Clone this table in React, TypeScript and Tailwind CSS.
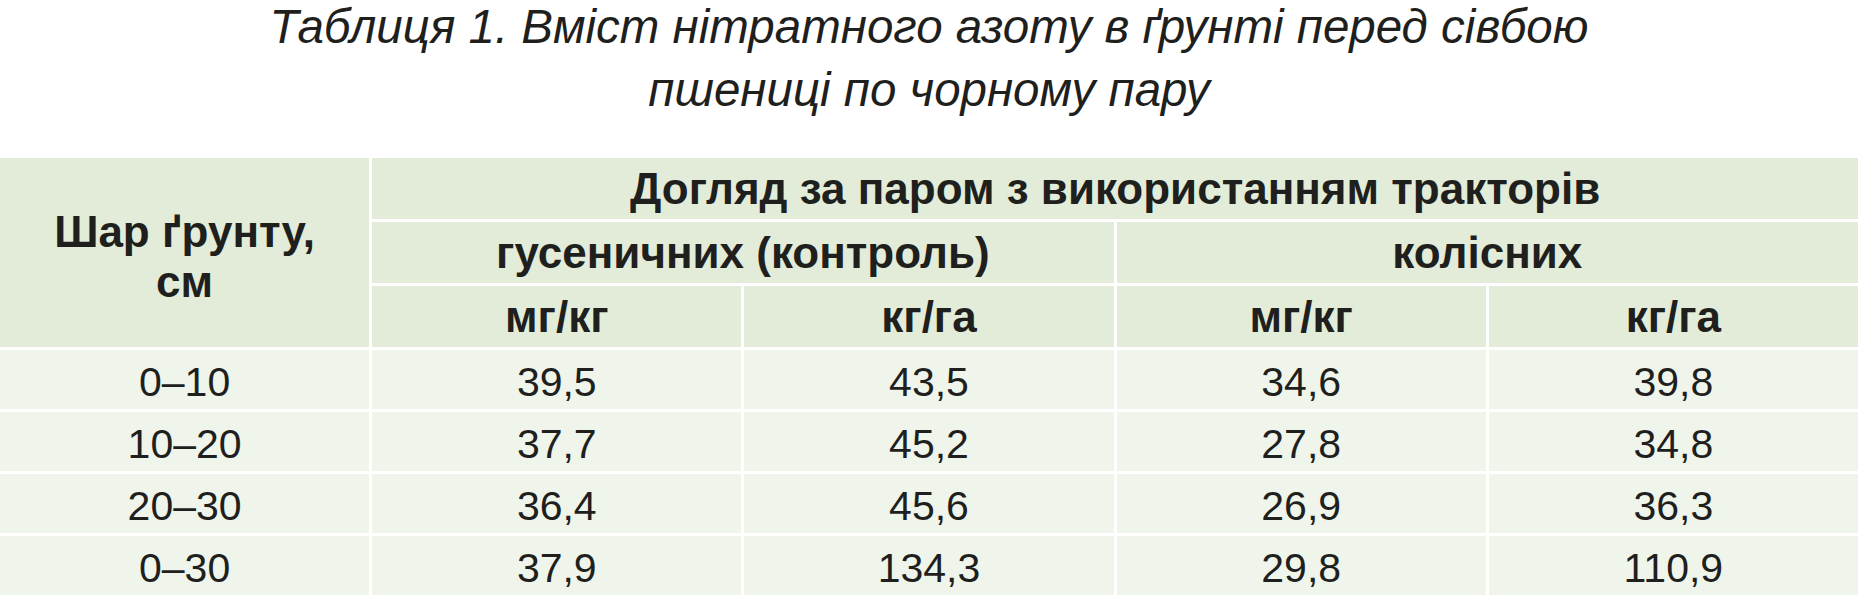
const head = "flex items-center justify-center bg-[#e2ecd9] text-[44px] font-bold leading-none text-[#1f1f1d]";
const cell = "flex items-center justify-center bg-[#eff5eb] pt-[6px] text-[41px] leading-none text-[#1f1f1d]";

const rows = [
  ["0–10", "39,5", "43,5", "34,6", "39,8"],
  ["10–20", "37,7", "45,2", "27,8", "34,8"],
  ["20–30", "36,4", "45,6", "26,9", "36,3"],
  ["0–30", "37,9", "134,3", "29,8", "110,9"],
];

export default function App() {
  return (
    <div className="h-[597px] w-[1858px] overflow-hidden bg-white font-['Liberation_Sans',Arial,sans-serif]">
      <h1 className="mt-[-5px] text-center text-[47.5px] leading-[63px] font-normal italic text-[#1f1f1d]">
        Таблиця 1. Вміст нітратного азоту в ґрунті перед сівбою
        <br />
        пшениці по чорному пару
      </h1>

      <div className="mt-[37px] grid grid-cols-5 grid-rows-[61px_61px_61px_59px_59px_59px_59px] gap-[3px] bg-white">
        <div className="row-span-3 flex flex-col items-center justify-center bg-[#e2ecd9] pt-[8px] text-[44px] font-bold text-[#1f1f1d]">
          <span className="leading-[50px]">Шар ґрунту,</span>
          <span className="leading-[50px]">см</span>
        </div>
        <div className={`${head} col-span-4`}>Догляд за паром з використанням тракторів</div>
        <div className={`${head} col-span-2`}>гусеничних (контроль)</div>
        <div className={`${head} col-span-2`}>колісних</div>
        <div className={head}>мг/кг</div>
        <div className={head}>кг/га</div>
        <div className={head}>мг/кг</div>
        <div className={head}>кг/га</div>
        {rows.map((r) =>
          r.map((v, i) => (
            <div key={r[0] + i} className={cell}>
              {v}
            </div>
          ))
        )}
      </div>
    </div>
  );
}
